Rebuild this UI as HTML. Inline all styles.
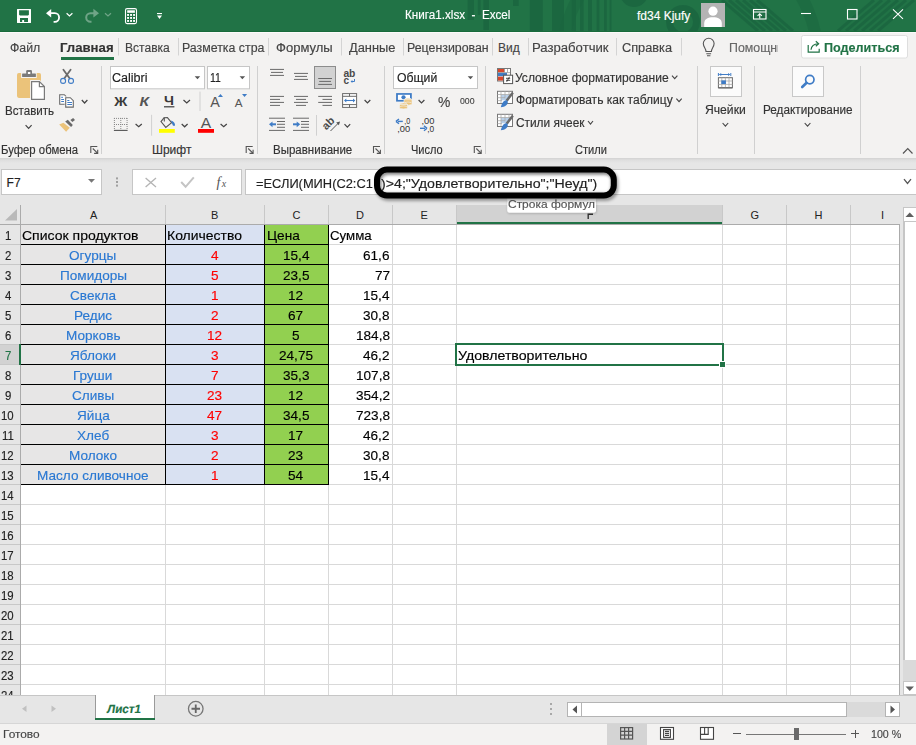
<!DOCTYPE html>
<html><head><meta charset="utf-8">
<style>
html,body{margin:0;padding:0}
body{width:916px;height:745px;overflow:hidden;position:relative;background:#fff;font-family:"Liberation Sans",sans-serif}
.a{position:absolute}
.t{position:absolute;white-space:pre;font-family:"Liberation Sans",sans-serif;transform-origin:0 0;-webkit-text-stroke:0.15px currentColor}
svg{position:absolute;overflow:visible}
</style></head><body>
<!-- title bar -->
<div class="a" style="left:0;top:0;width:916px;height:32px;background:#217346;border-bottom:1px solid #196b3c;box-sizing:border-box"></div>
<!-- ribbon -->
<div class="a" style="left:0;top:32px;width:916px;height:126px;background:#f3f2f1;border-top:1px solid #fcfafa;box-sizing:border-box"></div>
<!-- formula area -->
<div class="a" style="left:0;top:158px;width:916px;height:47px;background:linear-gradient(#d2d2d2 0,#dedede 2px,#e6e6e6 5px)"></div>
<!-- name box -->
<div class="a" style="left:1px;top:169px;width:99px;height:24px;background:#fff;border:1px solid #c6c6c6"></div>
<!-- fx buttons box -->
<div class="a" style="left:132px;top:169px;width:108px;height:24px;background:#fff;border:1px solid #c6c6c6"></div>
<!-- formula box -->
<div class="a" style="left:245px;top:169px;width:680px;height:24px;background:#fff;border:1px solid #c6c6c6"></div>
<!-- headers -->
<div class="a" style="left:0;top:205px;width:903px;height:19px;background:#e6e6e6"></div>
<div class="a" style="left:0;top:224px;width:20px;height:471px;background:#e6e6e6"></div>
<!-- grid -->
<div class="a" style="left:21px;top:225px;width:879px;height:470px;background:#fff"></div>
<!-- tab bar -->
<div class="a" style="left:0;top:695px;width:916px;height:28px;background:#e6e6e6;border-top:1px solid #c6c6c6;box-sizing:border-box"></div>
<div class="a" style="left:0;top:723px;width:916px;height:22px;background:#f3f2f1;border-top:1px solid #d6d6d6;box-sizing:border-box"></div>
<div class="a" style="left:21px;top:225px;width:144px;height:260px;background:#e7e6e6;"></div>
<div class="a" style="left:166px;top:225px;width:98px;height:260px;background:#d9e1f2;"></div>
<div class="a" style="left:265px;top:225px;width:63px;height:260px;background:#92d050;"></div>
<div class="a" style="left:21px;top:244px;width:879px;height:1px;background:#d9d9d9;"></div>
<div class="a" style="left:21px;top:264px;width:879px;height:1px;background:#d9d9d9;"></div>
<div class="a" style="left:21px;top:284px;width:879px;height:1px;background:#d9d9d9;"></div>
<div class="a" style="left:21px;top:304px;width:879px;height:1px;background:#d9d9d9;"></div>
<div class="a" style="left:21px;top:324px;width:879px;height:1px;background:#d9d9d9;"></div>
<div class="a" style="left:21px;top:344px;width:879px;height:1px;background:#d9d9d9;"></div>
<div class="a" style="left:21px;top:364px;width:879px;height:1px;background:#d9d9d9;"></div>
<div class="a" style="left:21px;top:384px;width:879px;height:1px;background:#d9d9d9;"></div>
<div class="a" style="left:21px;top:404px;width:879px;height:1px;background:#d9d9d9;"></div>
<div class="a" style="left:21px;top:424px;width:879px;height:1px;background:#d9d9d9;"></div>
<div class="a" style="left:21px;top:444px;width:879px;height:1px;background:#d9d9d9;"></div>
<div class="a" style="left:21px;top:464px;width:879px;height:1px;background:#d9d9d9;"></div>
<div class="a" style="left:21px;top:484px;width:879px;height:1px;background:#d9d9d9;"></div>
<div class="a" style="left:21px;top:504px;width:879px;height:1px;background:#d9d9d9;"></div>
<div class="a" style="left:21px;top:524px;width:879px;height:1px;background:#d9d9d9;"></div>
<div class="a" style="left:21px;top:544px;width:879px;height:1px;background:#d9d9d9;"></div>
<div class="a" style="left:21px;top:564px;width:879px;height:1px;background:#d9d9d9;"></div>
<div class="a" style="left:21px;top:584px;width:879px;height:1px;background:#d9d9d9;"></div>
<div class="a" style="left:21px;top:604px;width:879px;height:1px;background:#d9d9d9;"></div>
<div class="a" style="left:21px;top:624px;width:879px;height:1px;background:#d9d9d9;"></div>
<div class="a" style="left:21px;top:644px;width:879px;height:1px;background:#d9d9d9;"></div>
<div class="a" style="left:21px;top:664px;width:879px;height:1px;background:#d9d9d9;"></div>
<div class="a" style="left:21px;top:684px;width:879px;height:1px;background:#d9d9d9;"></div>
<div class="a" style="left:165px;top:225px;width:1px;height:470px;background:#d9d9d9;"></div>
<div class="a" style="left:264px;top:225px;width:1px;height:470px;background:#d9d9d9;"></div>
<div class="a" style="left:328px;top:225px;width:1px;height:470px;background:#d9d9d9;"></div>
<div class="a" style="left:392px;top:225px;width:1px;height:470px;background:#d9d9d9;"></div>
<div class="a" style="left:456px;top:225px;width:1px;height:470px;background:#d9d9d9;"></div>
<div class="a" style="left:722px;top:225px;width:1px;height:470px;background:#d9d9d9;"></div>
<div class="a" style="left:786px;top:225px;width:1px;height:470px;background:#d9d9d9;"></div>
<div class="a" style="left:850px;top:225px;width:1px;height:470px;background:#d9d9d9;"></div>
<div class="a" style="left:21px;top:244px;width:307px;height:1px;background:#000;"></div>
<div class="a" style="left:21px;top:264px;width:307px;height:1px;background:#000;"></div>
<div class="a" style="left:21px;top:284px;width:307px;height:1px;background:#000;"></div>
<div class="a" style="left:21px;top:304px;width:307px;height:1px;background:#000;"></div>
<div class="a" style="left:21px;top:324px;width:307px;height:1px;background:#000;"></div>
<div class="a" style="left:21px;top:344px;width:307px;height:1px;background:#000;"></div>
<div class="a" style="left:21px;top:364px;width:307px;height:1px;background:#000;"></div>
<div class="a" style="left:21px;top:384px;width:307px;height:1px;background:#000;"></div>
<div class="a" style="left:21px;top:404px;width:307px;height:1px;background:#000;"></div>
<div class="a" style="left:21px;top:424px;width:307px;height:1px;background:#000;"></div>
<div class="a" style="left:21px;top:444px;width:307px;height:1px;background:#000;"></div>
<div class="a" style="left:21px;top:464px;width:307px;height:1px;background:#000;"></div>
<div class="a" style="left:21px;top:484px;width:307px;height:1px;background:#000;"></div>
<div class="a" style="left:165px;top:224px;width:1px;height:261px;background:#000;"></div>
<div class="a" style="left:264px;top:224px;width:1px;height:261px;background:#000;"></div>
<div class="a" style="left:328px;top:224px;width:1px;height:261px;background:#000;"></div>
<div class="a" style="left:165px;top:205px;width:1px;height:19px;background:#c8c8c8;"></div>
<div class="a" style="left:264px;top:205px;width:1px;height:19px;background:#c8c8c8;"></div>
<div class="a" style="left:328px;top:205px;width:1px;height:19px;background:#c8c8c8;"></div>
<div class="a" style="left:392px;top:205px;width:1px;height:19px;background:#c8c8c8;"></div>
<div class="a" style="left:456px;top:205px;width:1px;height:19px;background:#c8c8c8;"></div>
<div class="a" style="left:722px;top:205px;width:1px;height:19px;background:#c8c8c8;"></div>
<div class="a" style="left:786px;top:205px;width:1px;height:19px;background:#c8c8c8;"></div>
<div class="a" style="left:850px;top:205px;width:1px;height:19px;background:#c8c8c8;"></div>
<div class="a" style="left:457px;top:205px;width:265px;height:19px;background:#d2d2d2;"></div>
<div class="a" style="left:0px;top:224px;width:900px;height:1px;background:#ababab;"></div>
<div class="a" style="left:457px;top:222px;width:265px;height:2px;background:#217346;"></div>
<div class="a" style="left:0px;top:244px;width:20px;height:1px;background:#c8c8c8;"></div>
<div class="a" style="left:0px;top:264px;width:20px;height:1px;background:#c8c8c8;"></div>
<div class="a" style="left:0px;top:284px;width:20px;height:1px;background:#c8c8c8;"></div>
<div class="a" style="left:0px;top:304px;width:20px;height:1px;background:#c8c8c8;"></div>
<div class="a" style="left:0px;top:324px;width:20px;height:1px;background:#c8c8c8;"></div>
<div class="a" style="left:0px;top:344px;width:20px;height:1px;background:#c8c8c8;"></div>
<div class="a" style="left:0px;top:364px;width:20px;height:1px;background:#c8c8c8;"></div>
<div class="a" style="left:0px;top:384px;width:20px;height:1px;background:#c8c8c8;"></div>
<div class="a" style="left:0px;top:404px;width:20px;height:1px;background:#c8c8c8;"></div>
<div class="a" style="left:0px;top:424px;width:20px;height:1px;background:#c8c8c8;"></div>
<div class="a" style="left:0px;top:444px;width:20px;height:1px;background:#c8c8c8;"></div>
<div class="a" style="left:0px;top:464px;width:20px;height:1px;background:#c8c8c8;"></div>
<div class="a" style="left:0px;top:484px;width:20px;height:1px;background:#c8c8c8;"></div>
<div class="a" style="left:0px;top:504px;width:20px;height:1px;background:#c8c8c8;"></div>
<div class="a" style="left:0px;top:524px;width:20px;height:1px;background:#c8c8c8;"></div>
<div class="a" style="left:0px;top:544px;width:20px;height:1px;background:#c8c8c8;"></div>
<div class="a" style="left:0px;top:564px;width:20px;height:1px;background:#c8c8c8;"></div>
<div class="a" style="left:0px;top:584px;width:20px;height:1px;background:#c8c8c8;"></div>
<div class="a" style="left:0px;top:604px;width:20px;height:1px;background:#c8c8c8;"></div>
<div class="a" style="left:0px;top:624px;width:20px;height:1px;background:#c8c8c8;"></div>
<div class="a" style="left:0px;top:644px;width:20px;height:1px;background:#c8c8c8;"></div>
<div class="a" style="left:0px;top:664px;width:20px;height:1px;background:#c8c8c8;"></div>
<div class="a" style="left:0px;top:684px;width:20px;height:1px;background:#c8c8c8;"></div>
<div class="a" style="left:0px;top:345px;width:19px;height:19px;background:#d2d2d2;"></div>
<div class="a" style="left:20px;top:205px;width:1px;height:490px;background:#ababab;"></div>
<div class="a" style="left:19px;top:344px;width:2px;height:21px;background:#217346;"></div>
<svg width="20" height="20" style="left:0;top:205px"><polygon points="17,4 17,15.5 5,15.5" fill="#b9b9b9"/></svg>
<div class="a" style="left:455px;top:343px;width:265px;height:19px;border:2px solid #217346"></div>
<div class="a" style="left:719px;top:361px;width:7px;height:7px;background:#fff;"></div>
<div class="a" style="left:720px;top:362px;width:5px;height:5px;background:#217346;"></div>
<div class="a" style="left:899px;top:224px;width:1px;height:471px;background:#ababab;"></div>
<div class="a" style="left:900px;top:205px;width:16px;height:490px;background:#e6e6e6;"></div>
<div class="a" style="left:903px;top:207px;width:13px;height:15px;background:#fff;border:1px solid #c6c6c6;box-sizing:border-box;border-right:none"></div>
<svg width="10" height="6" style="left:905px;top:212px"><polygon points="0.5,5 9,5 4.75,0.5" fill="#606060"/></svg>
<div class="a" style="left:903px;top:222px;width:13px;height:438px;background:#fff;border-left:2px solid #c6c6c6;box-sizing:border-box"></div>
<div class="a" style="left:903px;top:660px;width:13px;height:21px;background:#dadada;"></div>
<div class="a" style="left:903px;top:681px;width:13px;height:14px;background:#fff;border:1px solid #c6c6c6;box-sizing:border-box;border-right:none"></div>
<svg width="10" height="6" style="left:905px;top:686px"><polygon points="0.5,0.5 9,0.5 4.75,5" fill="#606060"/></svg>
<div class="a" style="left:95px;top:695px;width:60px;height:25px;background:#fff;border-left:1px solid #9a9a9a;border-right:1px solid #9a9a9a;box-sizing:border-box"></div>
<div class="a" style="left:95px;top:718px;width:60px;height:2px;background:#217346;"></div>
<svg width="8" height="10" style="left:21px;top:705px"><polygon points="5.5,0.5 5.5,7 1,3.75" fill="#c0c0c0"/></svg>
<svg width="8" height="10" style="left:51px;top:705px"><polygon points="0.5,0.5 0.5,7 5,3.75" fill="#c0c0c0"/></svg>
<svg width="18" height="18" style="left:187px;top:700px"><circle cx="8.75" cy="8.75" r="7.3" fill="none" stroke="#777" stroke-width="1.3"/><path d="M8.75 4.5v8.5M4.5 8.75h8.5" stroke="#666" stroke-width="1.8"/></svg>
<div class="a" style="left:550px;top:703px;width:2px;height:2px;background:#a8a8a8;"></div>
<div class="a" style="left:550px;top:708px;width:2px;height:2px;background:#a8a8a8;"></div>
<div class="a" style="left:550px;top:713px;width:2px;height:2px;background:#a8a8a8;"></div>
<div class="a" style="left:567px;top:702px;width:333px;height:15px;background:#dadada;"></div>
<div class="a" style="left:567px;top:702px;width:15px;height:15px;background:#fff;border:1px solid #b4b4b4;box-sizing:border-box"></div>
<svg width="8" height="10" style="left:572px;top:705px"><polygon points="5,0.5 5,8.5 0.5,4.5" fill="#555"/></svg>
<div class="a" style="left:581px;top:702px;width:266px;height:15px;background:#fff;border:1px solid #b4b4b4;box-sizing:border-box"></div>
<div class="a" style="left:885px;top:702px;width:15px;height:15px;background:#fff;border:1px solid #b4b4b4;box-sizing:border-box"></div>
<svg width="8" height="10" style="left:890px;top:705px"><polygon points="0.5,0.5 0.5,8.5 5,4.5" fill="#555"/></svg>
<div class="a" style="left:607px;top:724px;width:40px;height:21px;background:#d4d4d4;"></div>
<svg width="16" height="16" style="left:619px;top:726px"><g fill="none" stroke="#555" stroke-width="1.2"><rect x="1.6" y="1.6" width="12" height="11.4"/><path d="M1.6 5.4h12M1.6 9.2h12M5.6 1.6v11.4M9.6 1.6v11.4"/></g></svg>
<svg width="916" height="745" style="left:0;top:0"><g fill="none" stroke="#444" stroke-width="1.1"><rect x="660.5" y="727.5" width="13" height="11.8" fill="#fff"/><rect x="663.6" y="729.6" width="6.8" height="7.8"/><path d="M665 731.4h4M665 733.4h4M665 735.4h4"/><rect x="700.5" y="727.5" width="13" height="11.8" fill="#fff"/><path d="M700.5 734.4H708.2V727.5M704.6 727.5V734.4"/></g></svg>
<div class="a" style="left:733px;top:733px;width:8px;height:1px;background:#555;"></div>
<div class="a" style="left:746px;top:734px;width:100px;height:1px;background:#777;"></div>
<div class="a" style="left:794px;top:728px;width:5px;height:12px;background:#6a6a6a;"></div>
<div class="a" style="left:851px;top:733px;width:8px;height:1px;background:#555;"></div>
<div class="a" style="left:854.5px;top:729.5px;width:1px;height:8px;background:#555;"></div>
<svg width="916" height="745" style="left:0;top:0">
<defs><clipPath id="tb"><rect x="0" y="0" width="916" height="31"/></clipPath></defs><g clip-path="url(#tb)">
<g fill="#1b6640" opacity="0.9">
<rect x="467.6" y="0" width="6.399999999999977" height="20"/>
<rect x="477.8" y="0" width="2.8000000000000114" height="15"/>
<rect x="483.4" y="0" width="5.600000000000023" height="30"/>
<rect x="513" y="0" width="5.7000000000000455" height="6"/>
<rect x="529.8" y="0" width="13.0" height="31"/>
<rect x="552" y="0" width="12" height="31"/>
<rect x="571.6" y="0" width="4.399999999999977" height="31"/>
<rect x="580" y="0" width="3.6000000000000227" height="31"/>
<rect x="588" y="0" width="4" height="31"/>
<rect x="596.6" y="0" width="2.7999999999999545" height="31"/>
<rect x="604" y="0" width="2.7999999999999545" height="31"/>
<rect x="609.6" y="0" width="1.8999999999999773" height="31"/>
<circle cx="634" cy="-7" r="14"/>
</g>
<g fill="none" stroke="#1b6640" opacity="0.85">
<circle cx="683" cy="22" r="13.5" stroke-width="7"/>
<circle cx="690" cy="60" r="128" stroke-width="12" opacity="0.6"/>
<path d="M722 0 L758 31" stroke-width="3"/>
<path d="M729 0 L765 31" stroke-width="3"/>
<path d="M736 0 L772 31" stroke-width="3"/>
<path d="M743 0 L779 31" stroke-width="3"/>
<path d="M750 0 L786 31" stroke-width="3"/>
<path d="M757 0 L793 31" stroke-width="3"/>
<path d="M874 0 L838 31" stroke-width="3"/>
<path d="M882 0 L846 31" stroke-width="3"/>
<path d="M890 0 L854 31" stroke-width="3"/>
<path d="M898 0 L862 31" stroke-width="3"/>
<path d="M906 0 L870 31" stroke-width="3"/>
<path d="M914 0 L878 31" stroke-width="3"/>
</g></g>
<path fill-rule="evenodd" fill="#fff" d="M17.5 8.9 H30.5 A0.5 0.5 0 0 1 31 9.4 V22.5 A0.5 0.5 0 0 1 30.5 23 H17.5 A0.5 0.5 0 0 1 17 22.5 V9.4 A0.5 0.5 0 0 1 17.5 8.9 Z M19.1 10.3 V14.8 L20 15.6 H28 L28.9 14.8 V10.3 Z M20 17.9 V21.9 H22.2 V20.1 H24.1 V21.9 H28 V17.9 Z"/>
<path d="M46 13.2 L51.2 9 L51.2 17.4 Z" fill="#fff"/>
<path d="M50 13.2 H54.8 A4.3 4.3 0 0 1 54.8 21.8 H53.6" fill="none" stroke="#fff" stroke-width="1.8"/>
<path d="M66.6 13.2 L69.5 16 L72.4 13.2" fill="none" stroke="#fff" stroke-width="1.2"/>
<g opacity="0.35">
<path d="M99 13.2 L93.4 8.8 L93.4 17.6 Z" fill="#fff"/>
<path d="M95 13.2 H90.5 A4.3 4.3 0 0 0 90.5 21.8 H91.5" fill="none" stroke="#fff" stroke-width="2"/>
<path d="M105 13.2 L108 16 L111 13.2" fill="none" stroke="#fff" stroke-width="1.2"/>
</g>
<rect x="125.5" y="8.6" width="11" height="15" rx="1.6" fill="none" stroke="#fff" stroke-width="1.1"/>
<rect x="127.2" y="10.3" width="7.7" height="2.5" fill="#fff"/>
<rect x="127.1" y="14" width="1.9" height="1.9" fill="#fff"/>
<rect x="127.1" y="17" width="1.9" height="1.9" fill="#fff"/>
<rect x="127.1" y="20" width="1.9" height="1.9" fill="#fff"/>
<rect x="130.1" y="14" width="1.9" height="1.9" fill="#fff"/>
<rect x="130.1" y="17" width="1.9" height="1.9" fill="#fff"/>
<rect x="130.1" y="20" width="1.9" height="1.9" fill="#fff"/>
<rect x="133.1" y="14" width="1.9" height="1.9" fill="#fff"/>
<rect x="133.1" y="17" width="1.9" height="1.9" fill="#fff"/>
<rect x="133.1" y="20" width="1.9" height="1.9" fill="#fff"/>
<rect x="157" y="13" width="5" height="1.1" fill="#fff"/>
<path d="M157 15.6 H162 L159.5 19 Z" fill="#fff"/>
<rect x="701" y="3" width="24" height="24" fill="#b4b4b4"/>
<circle cx="713" cy="11.2" r="4.6" fill="#fff"/>
<path d="M704.2 27 V23.5 C704.2 19 708 17.3 713 17.3 C718 17.3 721.8 19 721.8 23.5 V27 Z" fill="#fff"/>
<g fill="none" stroke="#fff" stroke-width="1.1">
<rect x="753.5" y="9.5" width="12.5" height="9.5"/><path d="M753.5 12h12.5M759.75 18.5v-4.8M757.6 15.8l2.15-2.1 2.15 2.1"/>
<path d="M801 13.5h10"/>
<rect x="847.5" y="9.5" width="9.5" height="9.5"/>
<path d="M893 9.3l10 9.5M903 9.3l-10 9.5"/>
</g>
</svg><svg width="916" height="745" style="left:0;top:0">
<path d="M118.5 38 V55.5" stroke="#d4d4d4" stroke-width="1"/>
<path d="M178.5 38 V55.5" stroke="#d4d4d4" stroke-width="1"/>
<path d="M268.5 38 V55.5" stroke="#d4d4d4" stroke-width="1"/>
<path d="M341.5 38 V55.5" stroke="#d4d4d4" stroke-width="1"/>
<path d="M403.5 38 V55.5" stroke="#d4d4d4" stroke-width="1"/>
<path d="M492.5 38 V55.5" stroke="#d4d4d4" stroke-width="1"/>
<path d="M528.5 38 V55.5" stroke="#d4d4d4" stroke-width="1"/>
<path d="M616.5 38 V55.5" stroke="#d4d4d4" stroke-width="1"/>
<path d="M681.5 38 V55.5" stroke="#d4d4d4" stroke-width="1"/>
<rect x="61" y="57" width="53" height="3" fill="#217346"/>
<rect x="801.5" y="35.5" width="106" height="22.5" rx="2" fill="#fff" stroke="#dedede"/>
<g fill="none" stroke="#217346" stroke-width="1.2"><path d="M808.2 45 V52.2 H819.2 V48.8"/><path d="M811 49.8 C811.5 45.5 814 43.8 818.3 43.8"/><path d="M815.8 41.3 L818.6 43.8 L815.8 46.3"/></g>
<g fill="none" stroke="#555" stroke-width="1.1"><path d="M706 51.5 C706 48.5 703.3 47 703.3 43.6 A5.4 5.4 0 0 1 714.1 43.6 C714.1 47 711.4 48.5 711.4 51.5 Z"/><path d="M706.3 53.8 H711.1 M707 55.8 H710.4"/></g>
<path d="M101.5 66 V154" stroke="#d0d0d0" stroke-width="1"/>
<path d="M257.5 66 V154" stroke="#d0d0d0" stroke-width="1"/>
<path d="M384.5 66 V154" stroke="#d0d0d0" stroke-width="1"/>
<path d="M485.5 66 V154" stroke="#d0d0d0" stroke-width="1"/>
<path d="M697.5 66 V154" stroke="#d0d0d0" stroke-width="1"/>
<path d="M754.5 66 V154" stroke="#d0d0d0" stroke-width="1"/>
<path d="M860.5 66 V154" stroke="#d0d0d0" stroke-width="1"/>
<g fill="none" stroke="#555" stroke-width="1.1"><path d="M90.8 153 V146.5 H97.3"/><path d="M92.8 148.5 L97.5 153.2 M94.1 153.4 H97.7 V149.8"/></g>
<g fill="none" stroke="#555" stroke-width="1.1"><path d="M246.2 153 V146.5 H252.7"/><path d="M248.2 148.5 L252.89999999999998 153.2 M249.5 153.4 H253.1 V149.8"/></g>
<g fill="none" stroke="#555" stroke-width="1.1"><path d="M373.5 153 V146.5 H380"/><path d="M375.5 148.5 L380.2 153.2 M376.8 153.4 H380.4 V149.8"/></g>
<g fill="none" stroke="#555" stroke-width="1.1"><path d="M474.3 153 V146.5 H480.8"/><path d="M476.3 148.5 L481.0 153.2 M477.6 153.4 H481.2 V149.8"/></g>
<path d="M903 153.5 L907.75 148.5 L912.5 153.5" fill="none" stroke="#555" stroke-width="1.2"/>
<rect x="17" y="72.9" width="24" height="25" rx="1.8" fill="#ebc37a"/>
<rect x="21.1" y="72" width="15.6" height="6" fill="#f3f2f1"/>
<rect x="22.1" y="73.4" width="13.8" height="3.6" rx="0.5" fill="#7a7a7a"/>
<rect x="26.2" y="70" width="5.8" height="4.5" rx="1.2" fill="#7a7a7a"/>
<rect x="27.9" y="72" width="2.4" height="2" fill="#fff"/>
<path d="M30.1 80.1 H39.8 L45.9 86 V100.9 H30.1 Z" fill="#f3f2f1"/>
<path d="M31.6 81.6 H39.4 L44.4 86.6 V99.4 H31.6 Z" fill="#fff" stroke="#7a7a7a" stroke-width="1.2"/>
<path d="M39.4 81.6 V86.6 H44.4" fill="none" stroke="#7a7a7a" stroke-width="1.2"/>
<path d="M25.6 125.2 L28.6 128.4 L31.6 125.2" fill="none" stroke="#444" stroke-width="1.2"/>
<g fill="none" stroke="#6a6a6a" stroke-width="1.8" stroke-linecap="round"><path d="M63.4 69.8 L69.6 78.2"/><path d="M70.6 69.8 L64.4 78.2"/></g>
<g fill="none" stroke="#3f7cc6" stroke-width="1.1"><circle cx="63.1" cy="80.9" r="2.5"/><circle cx="71" cy="80.9" r="2.5"/></g>
<path d="M59.7 94.7 H64.3 L65.8 96.2 V104.3 H59.7 Z" fill="#fff" stroke="#6a6a6a" stroke-width="1.1"/>
<g stroke="#3f7cc6" stroke-width="1"><path d="M61.2 97.3 H63 M61.2 99.5 H64 M61.2 101.5 H64"/></g>
<path d="M64.6 96.6 H70.6 L74.4 100.4 V108.2 H64.6 Z" fill="#f3f2f1"/>
<path d="M65.7 97.7 H70.3 L73.3 100.7 V107.1 H65.7 Z" fill="#fff" stroke="#6a6a6a" stroke-width="1.1"/>
<g stroke="#3f7cc6" stroke-width="1"><path d="M67.3 100.5 H69.4 M67.3 102.5 H72 M67.3 104.5 H72"/></g>
<path d="M81.8 100 L84.6 103 L87.4 100" fill="none" stroke="#444" stroke-width="1.2"/>
<path d="M59.2 124.4 L63.4 122.7 L69.8 127.8 L66.1 131.8 Z" fill="#ebc37a"/>
<path d="M65.2 121.6 L67.8 119.8 L72.8 124.9 L71.1 126.9 Z" fill="#6a6a6a"/>
<path d="M70.4 119.9 L73.1 117.9 L75 120 L72.4 122 Z" fill="#6a6a6a"/>
<rect x="110.5" y="66.5" width="94" height="22.3" fill="#fff" stroke="#c6c6c6"/>
<rect x="207.5" y="66.5" width="42" height="22.3" fill="#fff" stroke="#c6c6c6"/>
<path d="M194.7 76.3 H200.2 L197.45 79.2 Z" fill="#555"/>
<path d="M239.6 76.3 H245.1 L242.35 79.2 Z" fill="#555"/>
<text x="114.2" y="105.6" font-family="Liberation Sans" font-weight="700" font-size="13" fill="#3a3a3a" textLength="13" lengthAdjust="spacingAndGlyphs">Ж</text>
<text x="139.6" y="105.6" font-family="Liberation Sans" font-weight="700" font-style="italic" font-size="13" fill="#555" textLength="9.5" lengthAdjust="spacingAndGlyphs">К</text>
<text x="164" y="104.8" font-family="Liberation Sans" font-weight="700" font-size="12.5" fill="#3a3a3a" textLength="10" lengthAdjust="spacingAndGlyphs">Ч</text>
<rect x="164" y="106.2" width="10.4" height="1.2" fill="#3a3a3a"/>
<path d="M183.5 100 L186.75 103 L190 100" fill="none" stroke="#444" stroke-width="1.2"/>
<path d="M200 91.6 V111" stroke="#d0d0d0"/>
<text x="210.2" y="107.3" font-family="Liberation Sans" font-size="14" fill="#555" textLength="9.6" lengthAdjust="spacingAndGlyphs">A</text>
<path d="M217.9 96.9 H223 L220.45 94 Z" fill="#3f7cc6"/>
<text x="234.8" y="107.3" font-family="Liberation Sans" font-size="10.5" fill="#555" textLength="7.8" lengthAdjust="spacingAndGlyphs">A</text>
<path d="M242 94 H247.1 L244.55 96.9 Z" fill="#3f7cc6"/>
<g stroke="#888" stroke-width="1" stroke-dasharray="1 1"><path d="M114 118.4 H127.5 M114 124.5 H127.5 M114.4 118 V130 M120.8 118 V130 M127.1 118 V130"/></g>
<path d="M113.9 130.4 H127.6" stroke="#555" stroke-width="1.1"/>
<path d="M135.6 124 L138.7 126.8 L141.8 124" fill="none" stroke="#444" stroke-width="1.2"/>
<path d="M151.6 114.8 V135.7" stroke="#d0d0d0"/>
<g fill="none" stroke="#555" stroke-width="1.1"><path d="M164 117.8 L161 121.6 L165.8 127.4 L171.6 122.6 L167.4 117.6 Z"/><path d="M164.3 117.6 V121.6"/></g>
<path d="M170.8 120.4 C173.8 121.3 175.2 123 175 125.8 L173 125.8 Z" fill="#3f7cc6"/>
<rect x="159" y="129" width="15.8" height="3.8" fill="#ffff00"/>
<path d="M181.7 124 L184.64999999999998 126.8 L187.6 124" fill="none" stroke="#444" stroke-width="1.2"/>
<text x="200.8" y="128.4" font-family="Liberation Sans" font-size="14" fill="#555" textLength="10.4" lengthAdjust="spacingAndGlyphs">A</text>
<rect x="198" y="129" width="16" height="3.8" fill="#ff0000"/>
<path d="M220.6 124 L223.7 126.8 L226.8 124" fill="none" stroke="#444" stroke-width="1.2"/>
<rect x="270" y="68.9" width="14" height="1" fill="#6a6a6a"/><rect x="271" y="71.9" width="12" height="1" fill="#6a6a6a"/><rect x="270" y="74.9" width="14" height="1" fill="#6a6a6a"/>
<rect x="294" y="72.9" width="14" height="1" fill="#6a6a6a"/><rect x="295" y="75.9" width="12" height="1" fill="#6a6a6a"/><rect x="294" y="78.9" width="14" height="1" fill="#6a6a6a"/>
<rect x="314.5" y="66.5" width="21" height="22" fill="#d2d2d2" stroke="#8c8c8c"/>
<rect x="318.2" y="78.0" width="13.800000000000011" height="1" fill="#6a6a6a"/><rect x="319.2" y="80.9" width="11.800000000000011" height="1" fill="#6a6a6a"/><rect x="318.2" y="83.9" width="13.800000000000011" height="1" fill="#6a6a6a"/>
<text x="343.4" y="76.9" font-family="Liberation Sans" font-weight="700" font-size="10" fill="#4a4a4a" textLength="12" lengthAdjust="spacingAndGlyphs">ab</text>
<text x="343.6" y="83.9" font-family="Liberation Sans" font-weight="700" font-size="10" fill="#4a4a4a">c</text>
<path d="M354.5 79 V81.5 H351.5" fill="none" stroke="#3f7cc6" stroke-width="1"/><path d="M350.6 81.5 L352.4 80 V83 Z" fill="#3f7cc6"/>
<rect x="270" y="95.9" width="14" height="1" fill="#6a6a6a"/><rect x="270" y="98.9" width="10" height="1" fill="#6a6a6a"/><rect x="270" y="101.9" width="14" height="1" fill="#6a6a6a"/><rect x="270" y="104.9" width="10" height="1" fill="#6a6a6a"/>
<rect x="294" y="95.9" width="14" height="1" fill="#6a6a6a"/><rect x="296" y="98.9" width="10" height="1" fill="#6a6a6a"/><rect x="294" y="101.9" width="14" height="1" fill="#6a6a6a"/><rect x="296" y="104.9" width="10" height="1" fill="#6a6a6a"/>
<rect x="318.2" y="95.9" width="13.800000000000011" height="1" fill="#6a6a6a"/><rect x="322.5" y="98.9" width="9.5" height="1" fill="#6a6a6a"/><rect x="318.2" y="101.9" width="13.800000000000011" height="1" fill="#6a6a6a"/><rect x="322.5" y="104.9" width="9.5" height="1" fill="#6a6a6a"/>
<rect x="342.6" y="93.6" width="14" height="13.8" fill="#fff" stroke="#6a6a6a"/>
<path d="M342.6 96.3 H356.6 M342.6 104.6 H356.6 M349.5 93.6 V96.3 M349.5 104.6 V107.4" stroke="#6a6a6a" fill="none"/>
<path d="M345.2 100.5 H354" stroke="#3f7cc6" stroke-width="1.1"/><path d="M344 100.5 L346.3 98.6 V102.4 Z M355.3 100.5 L353 98.6 V102.4 Z" fill="#3f7cc6"/>
<path d="M364.6 100 L367.45000000000005 103 L370.3 100" fill="none" stroke="#444" stroke-width="1.2"/>
<rect x="269" y="117.7" width="16" height="1" fill="#6a6a6a"/><rect x="277" y="121.0" width="8" height="1" fill="#6a6a6a"/><rect x="277" y="123.8" width="8" height="1" fill="#6a6a6a"/><rect x="277" y="126.8" width="8" height="1" fill="#6a6a6a"/><rect x="269" y="129.9" width="16" height="1" fill="#6a6a6a"/>
<path d="M276 124.3 H271.5" stroke="#3f7cc6" stroke-width="2"/><path d="M269 124.3 L272.5 121.4 V127.2 Z" fill="#3f7cc6"/>
<rect x="293" y="117.7" width="16" height="1" fill="#6a6a6a"/><rect x="301" y="121.0" width="8" height="1" fill="#6a6a6a"/><rect x="301" y="123.8" width="8" height="1" fill="#6a6a6a"/><rect x="301" y="126.8" width="8" height="1" fill="#6a6a6a"/><rect x="293" y="129.9" width="16" height="1" fill="#6a6a6a"/>
<path d="M293 124.3 H297.5" stroke="#3f7cc6" stroke-width="2"/><path d="M300.2 124.3 L296.7 121.4 V127.2 Z" fill="#3f7cc6"/>
<path d="M316.5 115 V135.7" stroke="#d0d0d0"/>
<text x="0" y="0" font-family="Liberation Sans" font-weight="700" font-size="11" fill="#4a4a4a" transform="translate(326.2 130.4) rotate(-45)">ab</text>
<path d="M330.5 131 L338.8 122.7" stroke="#555" stroke-width="1"/><path d="M340 121.5 L336.2 122.6 L338.9 125.3 Z" fill="#555"/>
<path d="M344.5 124.2 L347.35 127.2 L350.2 124.2" fill="none" stroke="#444" stroke-width="1.2"/>
<rect x="393.5" y="66.5" width="84" height="22" fill="#fff" stroke="#c6c6c6"/>
<path d="M467.7 76.3 H473.2 L470.45 79.2 Z" fill="#555"/>
<rect x="396.1" y="93.1" width="15.7" height="8.5" fill="#3f7cc6"/><rect x="397.9" y="94.8" width="12.1" height="5.1" fill="#fff"/><circle cx="403.5" cy="97.3" r="2.1" fill="#3f7cc6"/>
<g fill="#ebc37a" stroke="#f3f2f1" stroke-width="0.7"><ellipse cx="408" cy="99.8" rx="4" ry="1.6"/><rect x="404" y="99.8" width="8" height="4"/><ellipse cx="408" cy="103.6" rx="4" ry="1.6"/><ellipse cx="403.5" cy="104.4" rx="3.9" ry="1.5"/><rect x="399.6" y="104.4" width="7.8" height="3"/><ellipse cx="403.5" cy="107.4" rx="3.9" ry="1.5"/></g>
<path d="M418.6 100 L421.5 103 L424.4 100" fill="none" stroke="#444" stroke-width="1.2"/>
<path d="M402.8 121.4 H398" stroke="#3f7cc6" stroke-width="1.4"/><path d="M396 121.4 L399 119 M396 121.4 L399 123.8" stroke="#3f7cc6" stroke-width="1.4" fill="none"/>
<text x="404.2" y="123.6" font-family="Liberation Sans" font-size="8.6" fill="#333" textLength="6" lengthAdjust="spacingAndGlyphs">,0</text>
<text x="397.2" y="132" font-family="Liberation Sans" font-size="8.6" fill="#333" textLength="13" lengthAdjust="spacingAndGlyphs">,00</text>
<text x="421.4" y="123.6" font-family="Liberation Sans" font-size="8.6" fill="#333" textLength="13" lengthAdjust="spacingAndGlyphs">,00</text>
<path d="M420 128.3 H425" stroke="#3f7cc6" stroke-width="1.4"/><path d="M427 128.3 L424 125.9 M427 128.3 L424 130.7" stroke="#3f7cc6" stroke-width="1.4" fill="none"/>
<text x="427.2" y="132" font-family="Liberation Sans" font-size="8.6" fill="#333" textLength="7" lengthAdjust="spacingAndGlyphs">,0</text>
<rect x="497.5" y="68.5" width="13" height="12.5" fill="#fff" stroke="#777"/>
<rect x="498" y="69" width="6.5" height="3.4" fill="#d9472b"/><rect x="498" y="72.8" width="9" height="3.4" fill="#3f7cc6"/><rect x="498" y="76.6" width="5" height="3.9" fill="#d9472b"/>
<path d="M504.5 69 V72.4 M507.5 69 V72.4 M498 72.6 H510" stroke="#999" stroke-width="0.8"/>
<rect x="503.6" y="75.2" width="9" height="8.4" fill="#fff" stroke="#555"/>
<path d="M506 78.3 H510.2 M506 80.3 H510.2 M509.5 76.8 L506.7 81.8" stroke="#333" stroke-width="0.9"/>
<rect x="497.5" y="91.3" width="15" height="12.2" fill="#fff" stroke="#777"/>
<rect x="501" y="94.8" width="8" height="5.5" fill="#b8d0ea"/>
<path d="M497.5 94.5 H512.5 M497.5 97.7 H505 M497.5 100.6 H502 M501 91.3 V103.3 M505 91.3 V98.3 M509 91.3 V95.3" stroke="#aaa" stroke-width="0.8" fill="none"/>
<path d="M512.8 92.7 L506.6 100.7" stroke="#6a6a6a" stroke-width="2.6"/>
<path d="M506.3 100.1 C503 100.89999999999999 502 103.3 500.8 107.3 C505 106.89999999999999 508 104.8 507.8 101.5 Z" fill="#3f7cc6"/>
<rect x="497.5" y="114.3" width="15" height="12.2" fill="#fff" stroke="#777"/>
<rect x="501" y="117.8" width="8" height="5.5" fill="#b8d0ea"/>
<path d="M497.5 117.5 H512.5 M497.5 120.7 H505 M497.5 123.6 H502 M501 114.3 V126.3 M505 114.3 V121.3 M509 114.3 V118.3" stroke="#aaa" stroke-width="0.8" fill="none"/>
<path d="M512.8 115.7 L506.6 123.7" stroke="#6a6a6a" stroke-width="2.6"/>
<path d="M506.3 123.1 C503 123.89999999999999 502 126.3 500.8 130.3 C505 129.9 508 127.8 507.8 124.5 Z" fill="#3f7cc6"/>
<path d="M672 75.6 L674.7 78.7 L677.4 75.6" fill="none" stroke="#444" stroke-width="1.1"/>
<path d="M676.4 98.6 L679.05 101.7 L681.7 98.6" fill="none" stroke="#444" stroke-width="1.1"/>
<path d="M588 121 L590.5 124.1 L593 121" fill="none" stroke="#444" stroke-width="1.1"/>
<rect x="710.5" y="66.5" width="31" height="30" fill="#fbfbfb" stroke="#c8c8c8"/>
<path d="M718.4 73 V76 M730.8 73 V76 M719.5 74.5 H729.7" stroke="#3f7cc6" stroke-width="1"/><path d="M719 74.5 L721.2 73 V76 Z M730.2 74.5 L728 73 V76 Z" fill="#3f7cc6"/>
<rect x="718.4" y="77.7" width="14" height="10" fill="#fff" stroke="#6a6a6a"/>
<path d="M718.4 81 H732.4 M718.4 84.4 H732.4 M721.8 77.7 V87.7 M725.4 77.7 V87.7 M729 77.7 V87.7" stroke="#aaa" stroke-width="0.8"/>
<rect x="721.3" y="80.4" width="4.6" height="3.6" fill="#3f7cc6"/>
<path d="M718.4 87.9 H732.4" stroke="#6a6a6a" stroke-width="1.2"/>
<path d="M722.6 123 L725.4000000000001 126.1 L728.2 123" fill="none" stroke="#444" stroke-width="1.1"/>
<rect x="792.5" y="66.5" width="31" height="30" fill="#fbfbfb" stroke="#c8c8c8"/>
<circle cx="809.8" cy="79.6" r="4.2" fill="none" stroke="#3f7cc6" stroke-width="1.7"/><path d="M806.6 82.8 L802.2 87" stroke="#3f7cc6" stroke-width="2.6" stroke-linecap="round"/>
<path d="M804.7 123 L807.55 126.1 L810.4 123" fill="none" stroke="#444" stroke-width="1.1"/>
<path d="M88 179 H95 L91.5 182.8 Z" fill="#777"/>
<g fill="#a0a0a0"><rect x="116" y="177.4" width="2" height="2"/><rect x="116" y="181" width="2" height="2"/><rect x="116" y="184.6" width="2" height="2"/></g>
<path d="M145.6 177.9 L156 187 M156 177.9 L145.6 187" stroke="#b4b4b4" stroke-width="1.3"/>
<path d="M181.2 182 L185.6 186.8 L193.8 177.4" fill="none" stroke="#c4c4c4" stroke-width="2"/>
<text x="216.4" y="186.8" font-family="Liberation Serif" font-style="italic" font-size="14" fill="#555">f</text>
<text x="221.8" y="187.4" font-family="Liberation Serif" font-style="italic" font-size="10" fill="#555">x</text>
<path d="M904 179.2 L907.5 183.4 L911 179.2" fill="none" stroke="#555" stroke-width="1.3"/>
</svg><svg width="916" height="745" style="left:0;top:0">
<path d="M588.2 219 V214.3 H593" fill="none" stroke="#333" stroke-width="1.4"/>
<defs><filter id="tsh" x="-10%" y="-50%" width="120%" height="200%"><feGaussianBlur stdDeviation="1"/></filter></defs><rect x="507.5" y="200" width="89" height="13.8" rx="2" fill="#000" opacity="0.18" filter="url(#tsh)"/>
<path d="M507.2 196 H596 V210.8 A2 2 0 0 1 594 212.8 H509.2 A2 2 0 0 1 507.2 210.8 Z" fill="#fff"/>
</svg>
<div class="t" style="left:404.53px;top:9.00px;font-size:12px;line-height:12px;color:#ffffff;transform:scaleX(0.9720);">Книга1.xlsx  -  Excel</div>
<div class="t" style="left:637.00px;top:9.50px;font-size:12px;line-height:12px;color:#ffffff;">fd34 Kjufy</div>
<div class="t" style="left:9.57px;top:41.60px;font-size:12px;line-height:12px;color:#444444;transform:scaleX(1.0250);">Файл</div>
<div class="t" style="left:60.30px;top:41.60px;font-size:12px;line-height:12px;color:#333333;font-weight:700;transform:scaleX(1.0979);">Главная</div>
<div class="t" style="left:125.40px;top:41.60px;font-size:12px;line-height:12px;color:#444444;transform:scaleX(1.0045);">Вставка</div>
<div style="position:absolute;left:178px;top:0px;width:87px;height:745px;overflow:hidden"><div style="position:absolute;left:-178px;top:0px;width:916px;height:745px"><div class="t" style="left:182.07px;top:41.60px;font-size:12px;line-height:12px;color:#444444;transform:scaleX(1.0300);">Разметка страницы</div></div></div>
<div class="t" style="left:275.91px;top:41.60px;font-size:12px;line-height:12px;color:#444444;transform:scaleX(1.0863);">Формулы</div>
<div class="t" style="left:348.70px;top:41.60px;font-size:12px;line-height:12px;color:#444444;transform:scaleX(1.0721);">Данные</div>
<div style="position:absolute;left:404px;top:0px;width:85px;height:745px;overflow:hidden"><div style="position:absolute;left:-404px;top:0px;width:916px;height:745px"><div class="t" style="left:406.97px;top:41.60px;font-size:12px;line-height:12px;color:#444444;transform:scaleX(1.0300);">Рецензирование</div></div></div>
<div class="t" style="left:498.00px;top:41.60px;font-size:12px;line-height:12px;color:#444444;">Вид</div>
<div class="t" style="left:531.71px;top:41.60px;font-size:12px;line-height:12px;color:#444444;transform:scaleX(1.0942);">Разработчик</div>
<div class="t" style="left:622.44px;top:41.60px;font-size:12px;line-height:12px;color:#444444;transform:scaleX(1.0630);">Справка</div>
<div style="position:absolute;left:725px;top:0px;width:53px;height:745px;overflow:hidden"><div style="position:absolute;left:-725px;top:0px;width:916px;height:745px"><div class="t" style="left:729.37px;top:41.60px;font-size:12px;line-height:12px;color:#666666;transform:scaleX(1.0300);">Помощник</div></div></div>
<div class="t" style="left:824.03px;top:41.00px;font-size:13px;line-height:13px;color:#217346;font-weight:700;transform:scaleX(0.9697);">Поделиться</div>
<div class="t" style="left:4.63px;top:105.00px;font-size:12px;line-height:12px;color:#333333;transform:scaleX(0.9653);">Вставить</div>
<div class="t" style="left:0.76px;top:143.80px;font-size:12px;line-height:12px;color:#333333;transform:scaleX(0.9450);">Буфер обмена</div>
<div class="t" style="left:112.36px;top:71.90px;font-size:12px;line-height:12px;color:#222222;transform:scaleX(1.0438);">Calibri</div>
<div class="t" style="left:210.13px;top:71.90px;font-size:12px;line-height:12px;color:#222222;transform:scaleX(0.8727);">11</div>
<div class="t" style="left:151.90px;top:143.70px;font-size:12px;line-height:12px;color:#333333;">Шрифт</div>
<div class="t" style="left:272.64px;top:143.50px;font-size:12px;line-height:12px;color:#333333;transform:scaleX(0.9593);">Выравнивание</div>
<div class="t" style="left:396.60px;top:71.90px;font-size:12px;line-height:12px;color:#222222;transform:scaleX(1.0205);">Общий</div>
<div class="t" style="left:410.78px;top:143.80px;font-size:12px;line-height:12px;color:#333333;transform:scaleX(0.9182);">Число</div>
<div class="t" style="left:515.49px;top:71.60px;font-size:12px;line-height:12px;color:#333333;transform:scaleX(1.0066);">Условное форматирование</div>
<div class="t" style="left:515.50px;top:94.40px;font-size:12px;line-height:12px;color:#333333;transform:scaleX(1.0039);">Форматировать как таблицу</div>
<div class="t" style="left:515.51px;top:116.80px;font-size:12px;line-height:12px;color:#333333;transform:scaleX(0.9882);">Стили ячеек</div>
<div class="t" style="left:574.68px;top:143.70px;font-size:12px;line-height:12px;color:#333333;transform:scaleX(0.9242);">Стили</div>
<div class="t" style="left:704.99px;top:103.80px;font-size:12px;line-height:12px;color:#333333;transform:scaleX(1.0128);">Ячейки</div>
<div class="t" style="left:762.52px;top:103.80px;font-size:12px;line-height:12px;color:#333333;transform:scaleX(0.9789);">Редактирование</div>
<div class="t" style="left:437.50px;top:94.80px;font-size:14px;line-height:14px;color:#444444;transform:scaleX(0.9917);">%</div>
<div class="t" style="left:459.70px;top:97.00px;font-size:9px;line-height:9px;color:#444444;transform:scaleX(0.9667);">000</div>
<div class="t" style="left:6.60px;top:176.60px;font-size:12px;line-height:12px;color:#222222;">F7</div>
<div class="t" style="left:255.81px;top:176.60px;font-size:13px;line-height:13px;color:#222222;transform:scaleX(0.9889);">=ЕСЛИ(МИН(С2:С1</div>
<div class="t" style="left:380.70px;top:176.60px;font-size:13px;line-height:13px;color:#222222;transform:scaleX(1.0909);">)&gt;4;"Удовлетворительно";"Неуд")</div>
<div class="t" style="left:90.00px;top:210.00px;font-size:11px;line-height:11px;color:#222222;-webkit-text-stroke:0;">A</div>
<div class="t" style="left:211.00px;top:210.00px;font-size:11px;line-height:11px;color:#222222;-webkit-text-stroke:0;">B</div>
<div class="t" style="left:292.50px;top:210.00px;font-size:11px;line-height:11px;color:#222222;-webkit-text-stroke:0;">C</div>
<div class="t" style="left:356.00px;top:210.00px;font-size:11px;line-height:11px;color:#222222;-webkit-text-stroke:0;">D</div>
<div class="t" style="left:420.50px;top:210.00px;font-size:11px;line-height:11px;color:#222222;-webkit-text-stroke:0;">E</div>
<div class="t" style="left:750.50px;top:210.00px;font-size:11px;line-height:11px;color:#222222;-webkit-text-stroke:0;">G</div>
<div class="t" style="left:814.50px;top:210.00px;font-size:11px;line-height:11px;color:#222222;-webkit-text-stroke:0;">H</div>
<div class="t" style="left:881.00px;top:210.00px;font-size:11px;line-height:11px;color:#222222;-webkit-text-stroke:0;">I</div>
<div class="t" style="left:4.58px;top:229.60px;font-size:12px;line-height:12px;color:#222222;transform:scaleX(0.9500);">1</div>
<div class="t" style="left:4.58px;top:249.60px;font-size:12px;line-height:12px;color:#222222;transform:scaleX(0.9500);">2</div>
<div class="t" style="left:4.58px;top:269.60px;font-size:12px;line-height:12px;color:#222222;transform:scaleX(0.9500);">3</div>
<div class="t" style="left:4.58px;top:289.60px;font-size:12px;line-height:12px;color:#222222;transform:scaleX(0.9500);">4</div>
<div class="t" style="left:4.58px;top:309.60px;font-size:12px;line-height:12px;color:#222222;transform:scaleX(0.9500);">5</div>
<div class="t" style="left:4.58px;top:329.60px;font-size:12px;line-height:12px;color:#222222;transform:scaleX(0.9500);">6</div>
<div class="t" style="left:4.58px;top:349.60px;font-size:12px;line-height:12px;color:#217346;transform:scaleX(0.9500);">7</div>
<div class="t" style="left:5.05px;top:369.60px;font-size:12px;line-height:12px;color:#222222;transform:scaleX(0.9500);">8</div>
<div class="t" style="left:4.58px;top:389.60px;font-size:12px;line-height:12px;color:#222222;transform:scaleX(0.9500);">9</div>
<div class="t" style="left:1.25px;top:409.60px;font-size:12px;line-height:12px;color:#222222;transform:scaleX(0.9500);">10</div>
<div class="t" style="left:1.73px;top:429.60px;font-size:12px;line-height:12px;color:#222222;transform:scaleX(0.9500);">11</div>
<div class="t" style="left:1.25px;top:449.60px;font-size:12px;line-height:12px;color:#222222;transform:scaleX(0.9500);">12</div>
<div class="t" style="left:1.25px;top:469.60px;font-size:12px;line-height:12px;color:#222222;transform:scaleX(0.9500);">13</div>
<div class="t" style="left:1.25px;top:489.60px;font-size:12px;line-height:12px;color:#222222;transform:scaleX(0.9500);">14</div>
<div class="t" style="left:1.25px;top:509.60px;font-size:12px;line-height:12px;color:#222222;transform:scaleX(0.9500);">15</div>
<div class="t" style="left:1.25px;top:529.60px;font-size:12px;line-height:12px;color:#222222;transform:scaleX(0.9500);">16</div>
<div class="t" style="left:1.25px;top:549.60px;font-size:12px;line-height:12px;color:#222222;transform:scaleX(0.9500);">17</div>
<div class="t" style="left:1.25px;top:569.60px;font-size:12px;line-height:12px;color:#222222;transform:scaleX(0.9500);">18</div>
<div class="t" style="left:1.25px;top:589.60px;font-size:12px;line-height:12px;color:#222222;transform:scaleX(0.9500);">19</div>
<div class="t" style="left:1.25px;top:609.60px;font-size:12px;line-height:12px;color:#222222;transform:scaleX(0.9500);">20</div>
<div class="t" style="left:1.25px;top:629.60px;font-size:12px;line-height:12px;color:#222222;transform:scaleX(0.9500);">21</div>
<div class="t" style="left:1.25px;top:649.60px;font-size:12px;line-height:12px;color:#222222;transform:scaleX(0.9500);">22</div>
<div class="t" style="left:1.25px;top:669.60px;font-size:12px;line-height:12px;color:#222222;transform:scaleX(0.9500);">23</div>
<div style="position:absolute;left:0px;top:0px;width:20px;height:695px;overflow:hidden"><div style="position:absolute;left:0px;top:0px;width:916px;height:745px"><div class="t" style="left:1.25px;top:689.60px;font-size:12px;line-height:12px;color:#222222;transform:scaleX(0.9500);">24</div></div></div>
<div class="t" style="left:22.22px;top:228.70px;font-size:13px;line-height:13px;color:#000;transform:scaleX(1.0783);">Список продуктов</div>
<div class="t" style="left:167.43px;top:228.70px;font-size:13px;line-height:13px;color:#000;transform:scaleX(1.0735);">Количество</div>
<div class="t" style="left:266.95px;top:228.70px;font-size:13px;line-height:13px;color:#000;transform:scaleX(1.0467);">Цена</div>
<div class="t" style="left:330.48px;top:228.70px;font-size:13px;line-height:13px;color:#000;transform:scaleX(1.0200);">Сумма</div>
<div class="t" style="left:69.27px;top:248.80px;font-size:13px;line-height:13px;color:#2a78d2;transform:scaleX(1.0450);">Огурцы</div>
<div class="t" style="left:211.14px;top:248.80px;font-size:13px;line-height:13px;color:#ff0000;transform:scaleX(1.0450);">4</div>
<div class="t" style="left:282.71px;top:248.80px;font-size:13px;line-height:13px;color:#000;transform:scaleX(1.0450);">15,4</div>
<div class="t" style="left:363.38px;top:248.80px;font-size:13px;line-height:13px;color:#000;transform:scaleX(1.0450);">61,6</div>
<div class="t" style="left:59.86px;top:268.80px;font-size:13px;line-height:13px;color:#2a78d2;transform:scaleX(1.0450);">Помидоры</div>
<div class="t" style="left:210.62px;top:268.80px;font-size:13px;line-height:13px;color:#ff0000;transform:scaleX(1.0450);">5</div>
<div class="t" style="left:282.71px;top:268.80px;font-size:13px;line-height:13px;color:#000;transform:scaleX(1.0450);">23,5</div>
<div class="t" style="left:374.87px;top:268.80px;font-size:13px;line-height:13px;color:#000;transform:scaleX(1.0450);">77</div>
<div class="t" style="left:69.79px;top:288.80px;font-size:13px;line-height:13px;color:#2a78d2;transform:scaleX(1.0450);">Свекла</div>
<div class="t" style="left:210.62px;top:288.80px;font-size:13px;line-height:13px;color:#ff0000;transform:scaleX(1.0450);">1</div>
<div class="t" style="left:288.46px;top:288.80px;font-size:13px;line-height:13px;color:#000;transform:scaleX(1.0450);">12</div>
<div class="t" style="left:363.38px;top:288.80px;font-size:13px;line-height:13px;color:#000;transform:scaleX(1.0450);">15,4</div>
<div class="t" style="left:73.97px;top:308.80px;font-size:13px;line-height:13px;color:#2a78d2;transform:scaleX(1.0450);">Редис</div>
<div class="t" style="left:210.62px;top:308.80px;font-size:13px;line-height:13px;color:#ff0000;transform:scaleX(1.0450);">2</div>
<div class="t" style="left:288.46px;top:308.80px;font-size:13px;line-height:13px;color:#000;transform:scaleX(1.0450);">67</div>
<div class="t" style="left:363.38px;top:308.80px;font-size:13px;line-height:13px;color:#000;transform:scaleX(1.0450);">30,8</div>
<div class="t" style="left:65.61px;top:328.80px;font-size:13px;line-height:13px;color:#2a78d2;transform:scaleX(1.0450);">Морковь</div>
<div class="t" style="left:206.96px;top:328.80px;font-size:13px;line-height:13px;color:#ff0000;transform:scaleX(1.0450);">12</div>
<div class="t" style="left:292.12px;top:328.80px;font-size:13px;line-height:13px;color:#000;transform:scaleX(1.0450);">5</div>
<div class="t" style="left:356.06px;top:328.80px;font-size:13px;line-height:13px;color:#000;transform:scaleX(1.0450);">184,8</div>
<div class="t" style="left:69.79px;top:348.80px;font-size:13px;line-height:13px;color:#2a78d2;transform:scaleX(1.0450);">Яблоки</div>
<div class="t" style="left:210.62px;top:348.80px;font-size:13px;line-height:13px;color:#ff0000;transform:scaleX(1.0450);">3</div>
<div class="t" style="left:279.06px;top:348.80px;font-size:13px;line-height:13px;color:#000;transform:scaleX(1.0450);">24,75</div>
<div class="t" style="left:363.38px;top:348.80px;font-size:13px;line-height:13px;color:#000;transform:scaleX(1.0450);">46,2</div>
<div class="t" style="left:73.44px;top:368.80px;font-size:13px;line-height:13px;color:#2a78d2;transform:scaleX(1.0450);">Груши</div>
<div class="t" style="left:210.62px;top:368.80px;font-size:13px;line-height:13px;color:#ff0000;transform:scaleX(1.0450);">7</div>
<div class="t" style="left:282.71px;top:368.80px;font-size:13px;line-height:13px;color:#000;transform:scaleX(1.0450);">35,3</div>
<div class="t" style="left:356.06px;top:368.80px;font-size:13px;line-height:13px;color:#000;transform:scaleX(1.0450);">107,8</div>
<div class="t" style="left:71.88px;top:388.80px;font-size:13px;line-height:13px;color:#2a78d2;transform:scaleX(1.0450);">Сливы</div>
<div class="t" style="left:206.96px;top:388.80px;font-size:13px;line-height:13px;color:#ff0000;transform:scaleX(1.0450);">23</div>
<div class="t" style="left:288.46px;top:388.80px;font-size:13px;line-height:13px;color:#000;transform:scaleX(1.0450);">12</div>
<div class="t" style="left:356.06px;top:388.80px;font-size:13px;line-height:13px;color:#000;transform:scaleX(1.0450);">354,2</div>
<div class="t" style="left:76.58px;top:408.80px;font-size:13px;line-height:13px;color:#2a78d2;transform:scaleX(1.0450);">Яйца</div>
<div class="t" style="left:207.49px;top:408.80px;font-size:13px;line-height:13px;color:#ff0000;transform:scaleX(1.0450);">47</div>
<div class="t" style="left:282.71px;top:408.80px;font-size:13px;line-height:13px;color:#000;transform:scaleX(1.0450);">34,5</div>
<div class="t" style="left:356.06px;top:408.80px;font-size:13px;line-height:13px;color:#000;transform:scaleX(1.0450);">723,8</div>
<div class="t" style="left:77.10px;top:428.80px;font-size:13px;line-height:13px;color:#2a78d2;transform:scaleX(1.0450);">Хлеб</div>
<div class="t" style="left:210.62px;top:428.80px;font-size:13px;line-height:13px;color:#ff0000;transform:scaleX(1.0450);">3</div>
<div class="t" style="left:288.46px;top:428.80px;font-size:13px;line-height:13px;color:#000;transform:scaleX(1.0450);">17</div>
<div class="t" style="left:363.38px;top:428.80px;font-size:13px;line-height:13px;color:#000;transform:scaleX(1.0450);">46,2</div>
<div class="t" style="left:68.74px;top:448.80px;font-size:13px;line-height:13px;color:#2a78d2;transform:scaleX(1.0450);">Молоко</div>
<div class="t" style="left:210.62px;top:448.80px;font-size:13px;line-height:13px;color:#ff0000;transform:scaleX(1.0450);">2</div>
<div class="t" style="left:288.46px;top:448.80px;font-size:13px;line-height:13px;color:#000;transform:scaleX(1.0450);">23</div>
<div class="t" style="left:363.38px;top:448.80px;font-size:13px;line-height:13px;color:#000;transform:scaleX(1.0450);">30,8</div>
<div class="t" style="left:37.39px;top:468.80px;font-size:13px;line-height:13px;color:#2a78d2;transform:scaleX(1.0450);">Масло сливочное</div>
<div class="t" style="left:210.62px;top:468.80px;font-size:13px;line-height:13px;color:#ff0000;transform:scaleX(1.0450);">1</div>
<div class="t" style="left:288.46px;top:468.80px;font-size:13px;line-height:13px;color:#000;transform:scaleX(1.0450);">54</div>
<div class="t" style="left:363.38px;top:468.80px;font-size:13px;line-height:13px;color:#000;transform:scaleX(1.0450);">15,4</div>
<div class="t" style="left:457.91px;top:348.50px;font-size:13px;line-height:13px;color:#000;transform:scaleX(1.0890);">Удовлетворительно</div>
<div class="t" style="left:507.61px;top:199.10px;font-size:11px;line-height:11px;color:#555555;transform:scaleX(1.0873);">Строка формул</div>
<div class="t" style="left:107.80px;top:702.70px;font-size:12px;line-height:12px;color:#217346;font-weight:700;transform:translateX(0.00px) scaleX(0.9714) skewX(-9deg);">Лист1</div>
<div class="t" style="left:2.62px;top:728.60px;font-size:11px;line-height:11px;color:#444444;transform:scaleX(1.0788);">Готово</div>
<div class="t" style="left:871.43px;top:729.10px;font-size:11px;line-height:11px;color:#444444;transform:scaleX(0.9700);">100 %</div>
<svg width="916" height="745" style="left:0;top:0">
<defs><filter id="sh" x="-20%" y="-50%" width="140%" height="200%"><feGaussianBlur stdDeviation="1.6"/></filter></defs>
<rect x="379" y="172" width="233" height="22" rx="7" fill="none" stroke="#000" stroke-opacity="0.25" stroke-width="3" filter="url(#sh)"/>
<rect x="378.5" y="172" width="237" height="26" rx="10" fill="none" stroke="#000" stroke-opacity="0.35" stroke-width="6" filter="url(#sh)"/>
<rect x="377" y="169.6" width="236.8" height="25.9" rx="10" fill="none" stroke="#000" stroke-width="6"/>
</svg>
</body></html>
